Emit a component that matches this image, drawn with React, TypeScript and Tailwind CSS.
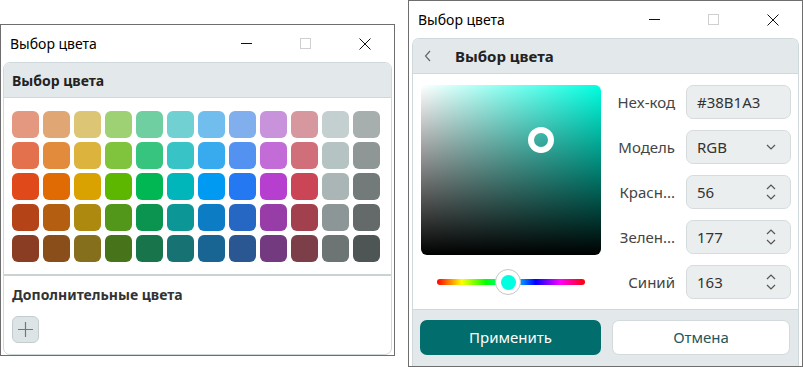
const SWATCHES = [
  ["#e3987f", "#e0a774", "#dcc574", "#9ed174", "#6fcfa0", "#70d0d2", "#71bdee", "#81aeec", "#c893db", "#d6979f", "#c4cfcf", "#a6aeae"],
  ["#e3714d", "#e38b3d", "#dcb33d", "#80c43d", "#37c47f", "#38c4c6", "#38abef", "#5392f0", "#c36bd6", "#d06e7a", "#b6c3c3", "#8f9696"],
  ["#e04a1b", "#e06b05", "#d9a200", "#5db700", "#00b753", "#00b6ba", "#009af2", "#2478f2", "#b63fcf", "#ca4657", "#aab6b6", "#737a7a"],
  ["#b44418", "#b45e11", "#ae8910", "#52961a", "#0b9450", "#0c9696", "#0c7cc4", "#2767c4", "#983da7", "#a2404d", "#8c9696", "#646a6a"],
  ["#8a3d22", "#8a4e1b", "#866f1c", "#47741b", "#18744a", "#177373", "#186493", "#2a5792", "#733a7f", "#7c3e48", "#6c7474", "#4e5555"],
];

function TitleBar() {
  return (
    <div className="h-[37px] flex items-center shrink-0">
      <span className="pl-[9px] text-[14px] text-black">Выбор цвета</span>
      <div className="ml-auto flex h-full">
        <div className="w-[59px] flex items-center justify-center">
          <svg width="11" height="11" viewBox="0 0 11 11">
            <path d="M0 5.5h11" stroke="#111" strokeWidth="1" />
          </svg>
        </div>
        <div className="w-[59px] flex items-center justify-center">
          <svg width="11" height="11" viewBox="0 0 11 11">
            <rect x="0.5" y="0.5" width="10" height="10" fill="none" stroke="#cfcfcf" strokeWidth="1" />
          </svg>
        </div>
        <div className="w-[59px] flex items-center justify-center">
          <svg width="12" height="12" viewBox="0 0 12 12">
            <path d="M0.5 0.5l11 11M11.5 0.5l-11 11" stroke="#111" strokeWidth="1" />
          </svg>
        </div>
      </div>
    </div>
  );
}

function Spinner() {
  return (
    <svg width="12" height="20" viewBox="0 0 12 20" className="ml-auto">
      <path d="M2 7l4-4 4 4M2 13l4 4 4-4" fill="none" stroke="#555" strokeWidth="1.2" />
    </svg>
  );
}

function Field({ label, value, kind }: { label: string; value: string; kind?: "select" | "spin" }) {
  return (
    <div className="flex items-center gap-[11px]">
      <span className="w-[74px] text-right text-[15px] text-[#444] whitespace-nowrap">{label}</span>
      <div className="w-[105px] h-[34px] rounded-[7px] bg-[#ebeeee] border border-[#d6dcdd] flex items-center pl-[10px] pr-[13px] text-[15px] text-[#333]">
        <span>{value}</span>
        {kind === "select" && (
          <svg width="12" height="8" viewBox="0 0 12 8" className="ml-auto">
            <path d="M2 2l4 4 4-4" fill="none" stroke="#555" strokeWidth="1.2" />
          </svg>
        )}
        {kind === "spin" && <Spinner />}
      </div>
    </div>
  );
}

export default function App() {
  return (
    <div className="w-[803px] h-[367px] bg-white flex items-start gap-[13px] font-['Noto_Sans',sans-serif] overflow-hidden">
      {/* palette window */}
      <div className="mt-[24px] w-[395px] h-[332px] border border-[#6e6e6e] bg-white flex flex-col">
        <TitleBar />
        <div className="flex-1 mx-[2px] rounded-[7px] border border-[#cfd8da] overflow-hidden flex flex-col">
          <div className="h-[35px] shrink-0 bg-[#e3e9eb] border-b border-[#cfd8da] flex items-center pl-[8px] text-[14px] font-bold text-[#222]">
            Выбор цвета
          </div>
          <div className="pt-[13px] pl-[8px] grid grid-cols-12 gap-[4px] w-fit">
            {SWATCHES.flat().map((c, i) => (
              <div key={i} className="w-[27px] h-[27px] rounded-[6px]" style={{ backgroundColor: c }} />
            ))}
          </div>
          <div className="mt-[12px] h-[2px] bg-[#c9d3d3]" />
          <div className="mt-[9px] pl-[8px] text-[14px] font-bold text-[#333] leading-[20px]">Дополнительные цвета</div>
          <div className="mt-[11px] ml-[8px] w-[27px] h-[27px] rounded-[6px] bg-[#dde4e6] border border-[#c4ccd0] flex items-center justify-center">
            <svg width="15" height="15" viewBox="0 0 15 15">
              <path d="M7.5 0v15M0 7.5h15" stroke="#6f787c" strokeWidth="1.2" />
            </svg>
          </div>
        </div>
      </div>

      {/* picker window */}
      <div className="w-[395px] h-[367px] border border-[#6e6e6e] bg-white flex flex-col">
        <TitleBar />
        <div className="flex-1 mx-[3px] rounded-t-[7px] border border-b-0 border-[#cfd8da] overflow-hidden flex flex-col">
          <div className="h-[35px] shrink-0 bg-[#e3e9eb] border-b border-[#cfd8da] flex items-center">
            <svg width="8" height="12" viewBox="0 0 8 12" className="ml-[11px]">
              <path d="M6 1L1.5 6 6 11" fill="none" stroke="#666" strokeWidth="1.2" />
            </svg>
            <span className="ml-[23px] text-[15px] font-bold text-[#222]">Выбор цвета</span>
          </div>
          <div className="flex-1 flex pt-[11px] pl-[8px] pr-[8px]">
            <div className="flex flex-col">
              <div className="relative w-[180px] h-[170px] rounded-[6px] bg-[linear-gradient(to_top,#000,transparent),linear-gradient(to_right,#fff,#00ffe1)]">
                <div className="absolute left-[107px] top-[42px] w-[26px] h-[26px] rounded-full border-[6px] border-white" />
              </div>
              <div className="mt-[14px] h-[26px] px-[16px] relative flex items-center">
                <div className="w-full h-[6px] rounded-full bg-[linear-gradient(to_right,#f00,#ff0,#0f0,#0ff,#00f,#f0f,#f00)]" />
                <div className="absolute left-[74px] top-0 w-[26px] h-[26px] rounded-full bg-white border border-[#c6c6c6] flex items-center justify-center">
                  <div className="w-[15px] h-[15px] rounded-full bg-[#00ffe1]" />
                </div>
              </div>
            </div>
            <div className="ml-auto flex flex-col gap-[11px]">
              <Field label="Hex-код" value="#38B1A3" />
              <Field label="Модель" value="RGB" kind="select" />
              <Field label="Красн..." value="56" kind="spin" />
              <Field label="Зелен..." value="177" kind="spin" />
              <Field label="Синий" value="163" kind="spin" />
            </div>
          </div>
          <div className="h-[57px] shrink-0 bg-[#e3e9eb] border-t border-[#cfd8da] flex gap-[11px] px-[7px] pt-[10px]">
            <div className="w-[181px] h-[35px] rounded-[7px] bg-[#016d6c] text-white text-[15px] flex items-center justify-center">
              Применить
            </div>
            <div className="w-[178px] h-[35px] rounded-[7px] bg-white border border-[#d3dadc] text-[#22585d] text-[15px] flex items-center justify-center">
              Отмена
            </div>
          </div>
        </div>
      </div>
    </div>
  );
}
